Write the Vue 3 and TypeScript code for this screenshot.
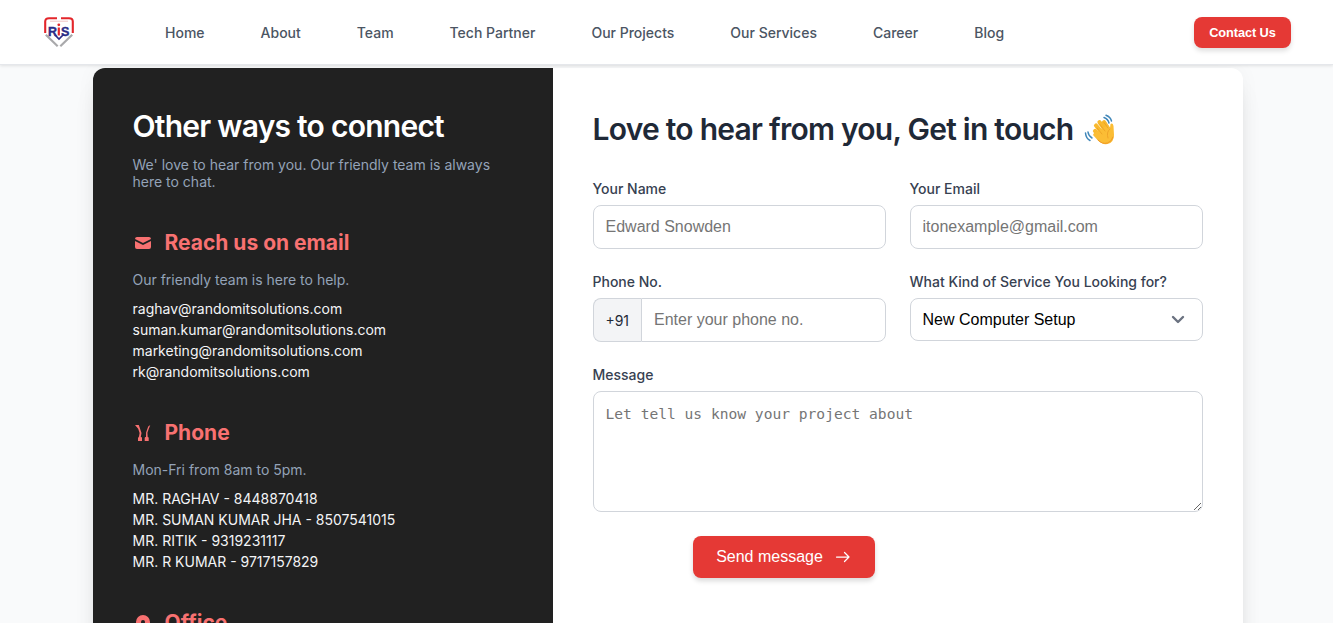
<script setup lang="ts">
import { ref } from 'vue'

const links: string[] = ['Home', 'About', 'Team', 'Tech Partner', 'Our Projects', 'Our Services', 'Career', 'Blog']
const emails: string[] = [
  'raghav@randomitsolutions.com',
  'suman.kumar@randomitsolutions.com',
  'marketing@randomitsolutions.com',
  'rk@randomitsolutions.com',
]
const phones: string[] = [
  'MR. RAGHAV - 8448870418',
  'MR. SUMAN KUMAR JHA - 8507541015',
  'MR. RITIK - 9319231117',
  'MR. R KUMAR - 9717157829',
]
const service = ref('New Computer Setup')
</script>

<template>
  <div class="page">
    <header class="bar">
      <svg class="logo" width="32" height="32" viewBox="0 0 32 32" fill="none">
        <path d="M2.2 17V5.5Q2.2 2.2 6 2.2H14M18 2.2H26Q29.8 2.2 29.8 5.5V17" stroke="#e3262b" stroke-width="2.1" />
        <path d="M2.8 18.8L14.7 30.3M29.2 18.8L17.3 30.3" stroke="#a9a9ab" stroke-width="2.2" />
        <path d="M7 5.2H25" stroke="#edb5b5" stroke-width=".8" />
        <text x="5" y="19.5" class="mark">R</text>
        <path d="M15.8 11.5V19.5" stroke="#e3262b" stroke-width="2.2" />
        <circle cx="15.8" cy="8.8" r="1.4" fill="#e3262b" />
        <text x="18" y="19.5" class="mark">S</text>
        <path d="M12 19L16 23L20 19" stroke="#292b86" stroke-width="1.7" />
      </svg>
      <nav class="nav">
        <a v-for="link in links" :key="link">{{ link }}</a>
      </nav>
      <button class="contact" type="button">Contact Us</button>
    </header>

    <main class="card">
      <aside class="side">
        <h2>Other ways to connect</h2>
        <p class="intro">We' love to hear from you. Our friendly team is always here to chat.</p>
        <section>
          <h3>
            <svg width="20" height="20" viewBox="0 0 20 20" fill="currentColor">
              <path d="M2.003 5.884L10 9.882l7.997-3.998A2 2 0 0016 4H4a2 2 0 00-1.997 1.884z" />
              <path d="M18 8.118l-8 4-8-4V14a2 2 0 002 2h12a2 2 0 002-2V8.118z" />
            </svg>
            Reach us on email
          </h3>
          <p class="note">Our friendly team is here to help.</p>
          <ul><li v-for="mail in emails" :key="mail">{{ mail }}</li></ul>
        </section>
        <section>
          <h3>
            <svg width="20" height="20" viewBox="0 0 20 20" fill="currentColor">
              <path d="M2 2h3.8l1 3 1.7 5-.7 4H8a1 1 0 011 1v3H5v-3l1-1.6.6-3.4-1.4-4.3z" />
              <path d="M17.3 2l-1.6 4-1.3 3.8.3 4.2a1 1 0 011 1v3h-4v-3a1 1 0 011-1h.3l.1-4.5L15.2 3.6z" />
            </svg>
            Phone
          </h3>
          <p class="note">Mon-Fri from 8am to 5pm.</p>
          <ul><li v-for="phone in phones" :key="phone">{{ phone }}</li></ul>
        </section>
        <section>
          <h3>
            <svg width="20" height="20" viewBox="0 0 20 20" fill="currentColor">
              <path fill-rule="evenodd" d="M5.05 4.05a7 7 0 119.9 9.9L10 18.9l-4.95-4.95a7 7 0 010-9.9zM10 11a2 2 0 100-4 2 2 0 000 4z" />
            </svg>
            Office
          </h3>
        </section>
      </aside>

      <form class="form" @submit.prevent>
        <h1>
          <span>Love to hear from you, Get in touch</span>
          <svg class="wave" width="32" height="32" viewBox="0 0 32 32" fill="none" stroke-linecap="round">
            <g stroke="#4087b9" stroke-width="1.5">
              <path d="M20 4.5Q24 6 25 10M22 2.3Q26.5 4 27.5 8M4 19Q4.5 23 8 25M1.5 20Q2 25.5 6 27.5" />
            </g>
            <g stroke="#f9b92e" stroke-width="4.2">
              <path d="M11 18L17 25M12 12.5L19 21M15.5 9.2L22 18M20 9.2L25 17" />
            </g>
            <path d="M10 20L24 12L26 15L26.5 11Q28.8 9.5 29.5 13L30 22Q30 29.5 23.5 31Q18 32 13.5 27L9 22Z" fill="#fbbd35" />
            <path d="M13 15L18 21M16 11.5L21 18M20 9.5L24 15" stroke="#e99b20" stroke-width=".7" />
            <path d="M26 16Q22 19 24 25" stroke="#eda027" stroke-width=".9" />
            <path d="M14 27Q18 31.5 23.5 30Q28 28.5 29 24" stroke="#ee9927" stroke-width="1" />
          </svg>
        </h1>
        <div class="grid">
          <label class="field">
            <span>Your Name</span>
            <input type="text" placeholder="Edward Snowden" />
          </label>
          <label class="field">
            <span>Your Email</span>
            <input type="email" placeholder="itonexample@gmail.com" />
          </label>
          <label class="field">
            <span>Phone No.</span>
            <div class="phone">
              <b>+91</b>
              <input type="tel" placeholder="Enter your phone no." />
            </div>
          </label>
          <label class="field">
            <span>What Kind of Service You Looking for?</span>
            <div class="select">
              <select v-model="service"><option>New Computer Setup</option></select>
              <svg width="24" height="24" viewBox="0 0 24 24" fill="none" stroke="#6b7280" stroke-width="2.4" stroke-linecap="round" stroke-linejoin="round">
                <path d="M7 10l5 5 5-5" />
              </svg>
            </div>
          </label>
          <label class="field wide">
            <span>Message</span>
            <textarea placeholder="Let tell us know your project about"></textarea>
          </label>
        </div>
        <button class="send" type="submit">
          Send message
          <svg width="16" height="16" viewBox="0 0 16 16" fill="none" stroke="currentColor" stroke-width="1.25" stroke-linecap="round" stroke-linejoin="round">
            <path d="M1.5 8H14M9.5 3.5L14 8L9.5 12.5" />
          </svg>
        </button>
      </form>
    </main>
  </div>
</template>

<style>
html, body { overflow: hidden; }
</style>

<style scoped>
* { box-sizing: border-box; margin: 0; padding: 0; }
.page { height: 623px; overflow: hidden; background: #f9fafb; font-family: Inter, sans-serif; color: #1f2937; }
.bar { position: relative; height: 65px; background: #fff; border-bottom: 1px solid #e5e7eb; box-shadow: 0 1px 3px rgba(0,0,0,.1); display: flex; align-items: center; padding: 0 42px 0 43px; }
.logo { flex: none; margin-top: -1px; }
.mark { font: 700 12.5px "Liberation Sans", sans-serif; fill: #292b86; stroke: #292b86; stroke-width: .4; }
.nav { display: flex; gap: 56px; margin-left: 90px; font-size: 14px; font-weight: 500; line-height: 20px; color: #4b5563; white-space: nowrap; margin-top: 2px; }
.contact { margin-left: auto; width: 97px; height: 31px; border: 0; border-radius: 8px; background: #e53935; color: #fff; font: 700 12.8px "Liberation Sans", sans-serif; letter-spacing: -.1px; box-shadow: 0 3px 5px rgba(0,0,0,.13); white-space: nowrap; }
.card { width: 1150px; height: 700px; margin: 3px 0 0 92.5px; display: flex; background: #fff; border-radius: 12px; overflow: hidden; box-shadow: 0 20px 25px -5px rgba(0,0,0,.1), 0 8px 10px -6px rgba(0,0,0,.1), 0 0 20px rgba(0,0,0,.04); }
.side { width: 460px; flex: none; padding: 40px; background: #212121; color: #f3f4f6; }
h2 { font-size: 30px; line-height: 36px; font-weight: 600; color: #fff; letter-spacing: -.75px; white-space: nowrap; }
.intro { margin-top: 12px; font-size: 14px; line-height: 17px; color: #94a3b8; }
section { margin-top: 34px; }
.intro + section { margin-top: 36px; }
h3 { display: flex; align-items: center; gap: 12px; font-size: 21px; line-height: 34px; font-weight: 700; color: #f87171; }
.note { margin-top: 10px; font-size: 14px; line-height: 20px; color: #94a3b8; }
ul { margin-top: 8px; list-style: none; font-size: 14px; font-weight: 400; line-height: 21px; white-space: nowrap; }
.form { flex: 1; padding: 43px 40px 40px; }
h1 { display: flex; align-items: center; gap: 11px; font-size: 30px; line-height: 36px; font-weight: 600; letter-spacing: -.75px; white-space: nowrap; }
.grid { margin-top: 32px; display: grid; grid-template-columns: 293px 293px; gap: 23px 24px; }
.field > span { display: block; font-size: 14px; line-height: 20px; font-weight: 500; color: #374151; margin-bottom: 6px; white-space: nowrap; }
.field { display: block; }
.wide { grid-column: 1 / 3; }
input, select { display: block; width: 100%; height: 44px; padding: 0 12px; border: 1px solid #d1d5db; border-radius: 8px; background: #fff; font: 16px "Liberation Sans", sans-serif; outline: 0; }
input::placeholder, textarea::placeholder { color: #757575; opacity: 1; }
.phone { display: flex; height: 44px; }
.phone b { width: 48.5px; flex: none; border: 1px solid #d1d5db; border-right: 0; border-radius: 8px 0 0 8px; background: #f3f4f6; font-size: 14px; font-weight: 400; text-align: center; line-height: 44px; }
.phone input { border-radius: 0 8px 8px 0; flex: 1; min-width: 0; }
.select { position: relative; }
select { height: 43px; appearance: none; color: #000; }
.select svg { position: absolute; right: 13px; top: 9px; }
textarea { display: block; width: 610px; height: 121px; padding: 12px; border: 1px solid #d1d5db; border-radius: 8px; font: 14.6px/20px "DejaVu Sans Mono", monospace; resize: vertical; outline: 0; }
.send { display: flex; align-items: center; justify-content: center; gap: 12px; margin: 24px 0 0 100px; width: 182px; height: 42px; border: 0; border-radius: 8px; background: #e53935; color: #fff; font: 16px "Liberation Sans", sans-serif; box-shadow: 0 3px 5px rgba(0,0,0,.15); white-space: nowrap; }
</style>
